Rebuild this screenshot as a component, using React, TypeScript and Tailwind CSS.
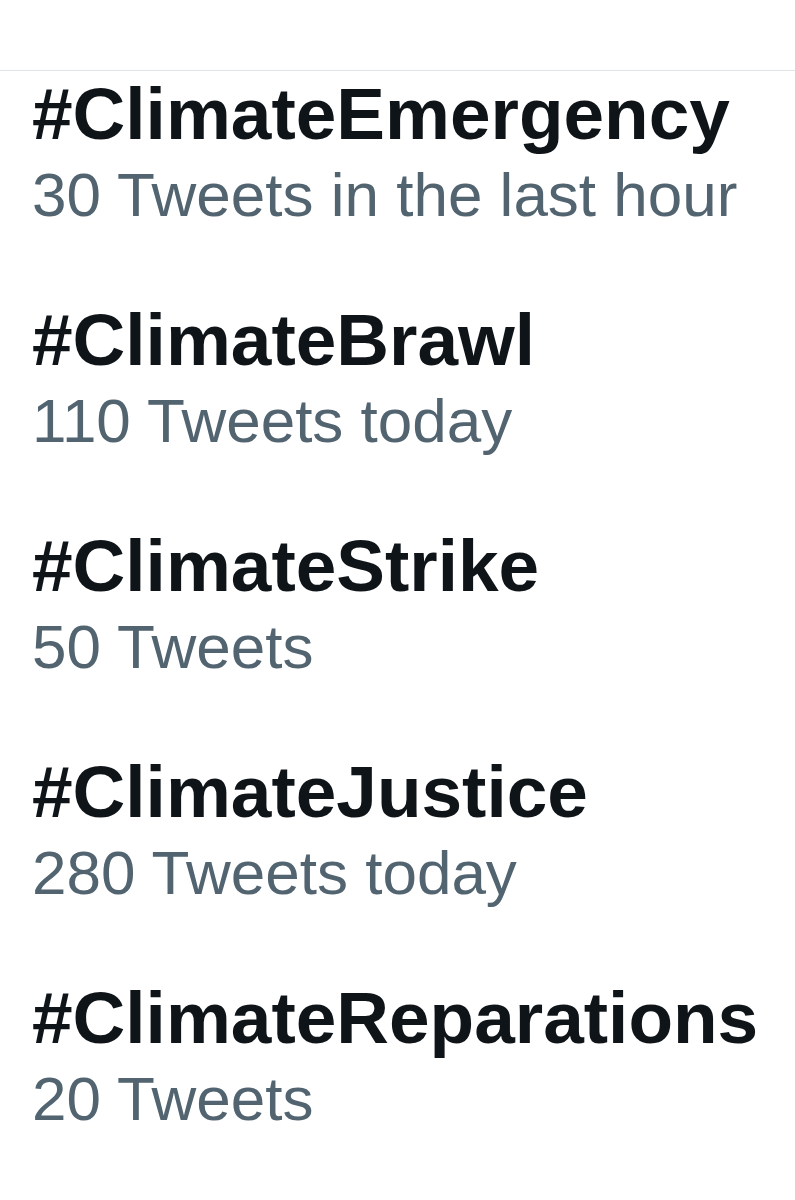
const trends = [
  { tag: '#ClimateEmergency', meta: '30 Tweets in the last hour' },
  { tag: '#ClimateBrawl', meta: '110 Tweets today' },
  { tag: '#ClimateStrike', meta: '50 Tweets' },
  { tag: '#ClimateJustice', meta: '280 Tweets today' },
  { tag: '#ClimateReparations', meta: '20 Tweets' },
];

export default function App() {
  return (
    <div className="min-h-screen bg-white font-['Liberation_Sans',Arial,sans-serif]">
      <div className="h-[71px] border-b border-[#e1e4e6]" />
      <div className="flex flex-col gap-[64px] pt-[3px] pl-[32px]">
        {trends.map((t) => (
          <div key={t.tag} className="flex flex-col">
            <span className="text-[73px] leading-[80px] font-bold text-[#0f1419]">{t.tag}</span>
            <span className="text-[62px] leading-[82px] text-[#536471]">{t.meta}</span>
          </div>
        ))}
      </div>
    </div>
  );
}
